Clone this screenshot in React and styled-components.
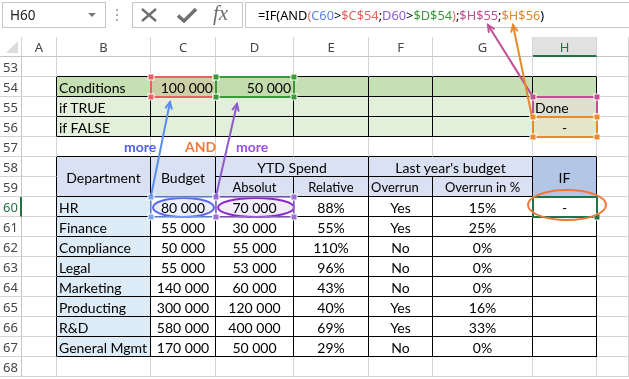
import styled, { createGlobalStyle } from "styled-components";

const GlobalStyle = createGlobalStyle`
  body {
    margin: 0;
    background: #fff;
    font-family: "Lato", "Liberation Sans", sans-serif;
  }
`;

const COLS = ["A", "B", "C", "D", "E", "F", "G", "H", "I"];
const ROWS = Array.from({ length: 16 }, (_, i) => 53 + i);

const people = [
  ["HR", "80 000", "70 000", "88%", "Yes", "15%", "-"],
  ["Finance", "55 000", "30 000", "55%", "Yes", "25%", ""],
  ["Compliance", "50 000", "55 000", "110%", "No", "0%", ""],
  ["Legal", "55 000", "53 000", "96%", "No", "0%", ""],
  ["Marketing", "140 000", "60 000", "43%", "No", "0%", ""],
  ["Producting", "300 000", "120 000", "40%", "Yes", "16%", ""],
  ["R&D", "580 000", "400 000", "69%", "Yes", "33%", ""],
  ["General Mgmt", "170 000", "50 000", "29%", "No", "0%", ""],
];

const cells = {
  B54: { t: "Conditions" },
  C54: { t: "100 000", a: "right", bg: "#cdd0a6" },
  D54: { t: "50 000", a: "right", bg: "#c3dcae" },
  B55: { t: "if TRUE" },
  H55: { t: "Done", bg: "#dedfcf" },
  B56: { t: "if FALSE" },
  H56: { t: "-", a: "center", bg: "#e3e6c8" },
  B58: { t: "Department", a: "center", rs: 2 },
  C58: { t: "Budget", a: "center", rs: 2 },
  D58: { t: "YTD Spend", a: "center", cs: 2 },
  F58: { t: "Last year's budget", a: "center", cs: 2 },
  H58: { t: "IF", a: "center", rs: 2, bg: "#b4c6e7" },
  D59: { t: "Absolut", a: "center", small: true },
  E59: { t: "Relative", a: "center", small: true },
  F59: { t: "Overrun", small: true },
  G59: { t: "Overrun in %", a: "center", small: true },
};
people.forEach((p, i) => {
  const r = 60 + i;
  cells["B" + r] = { t: p[0], bg: "#ddebf7" };
  ["C", "D", "E", "F", "G", "H"].forEach((c, j) => {
    cells[c + r] = { t: p[j + 1], a: "center" };
  });
});
const covered = new Set(["B59", "C59", "E58", "G58", "H59"]);

const inRange = (r, c) =>
  c >= 1 && c <= 7 && ((r >= 54 && r <= 56) || (r >= 58 && r <= 67));

const fillFor = (r, c) => {
  if (c < 1 || c > 7) return "#fff";
  if (r === 54) return "#c6e0b4";
  if (r === 55 || r === 56) return "#e2efda";
  if (r === 58 || r === 59) return "#d9e1f2";
  return "#fff";
};

const Page = styled.div`
  position: relative;
  width: 629px;
  height: 379px;
  overflow: hidden;
`;

const FormulaBar = styled.div`
  display: flex;
  align-items: stretch;
  height: 26px;
  padding: 2px 0 9px 2px;
  font-family: "Noto Sans", "Open Sans", sans-serif;
`;

const NameBox = styled.div`
  width: 104px;
  box-sizing: border-box;
  border: 1px solid #c6c6c6;
  display: flex;
  align-items: center;
  justify-content: space-between;
  padding: 0 9px 0 7px;
  font-size: 13.5px;
  color: #222;
`;

const Caret = styled.span`
  width: 0;
  height: 0;
  border-left: 4px solid transparent;
  border-right: 4px solid transparent;
  border-top: 4px solid #7a7a7a;
`;

const Dots = styled.div`
  width: 2px;
  height: 12px;
  margin: 7px 14px 0 10px;
  background: repeating-linear-gradient(#b0b0b0 0 2px, transparent 2px 5px);
`;

const IconBox = styled.div`
  width: 111px;
  box-sizing: border-box;
  border: 1px solid #c6c6c6;
  display: flex;
  align-items: center;
  padding-left: 7px;
  gap: 19px;
  color: #707070;
`;

const Fx = styled.span`
  font-family: "Liberation Serif", serif;
  font-style: italic;
  font-size: 21px;
  color: #6e6e6e;
  margin-left: -3px;
  margin-top: -3px;
`;

const FormulaInput = styled.div`
  flex: 1;
  margin-left: 2px;
  border: 1px solid #c6c6c6;
  border-right: none;
  display: flex;
  align-items: center;
  padding-left: 12px;
  font-size: 12.8px;
  white-space: nowrap;
  color: #000;
`;

const Ref = styled.span`
  color: ${(p) => p.$c};
`;

const Sheet = styled.div`
  display: grid;
  grid-template-columns: 22px 35px 94px 65px 78px 75px 64px 100px 64px 1fr;
  grid-auto-rows: 20px;
`;

const Corner = styled.div`
  grid-row: 1;
  grid-column: 1;
  box-sizing: border-box;
  border-right: 1px solid #d4d4d4;
  border-bottom: 1px solid #c6c6c6;
  position: relative;
  &::after {
    content: "";
    position: absolute;
    right: 3px;
    bottom: 3px;
    width: 0;
    height: 0;
    border-left: 12px solid transparent;
    border-bottom: 12px solid #dcdcdc;
  }
`;

const ColHead = styled.div`
  grid-row: 1;
  grid-column: ${(p) => p.$col};
  box-sizing: border-box;
  border-right: 1px solid #d4d4d4;
  border-bottom: ${(p) => (p.$on ? "2px solid #217346" : "1px solid #c6c6c6")};
  background: ${(p) => (p.$on ? "#e1e1e1" : "#fff")};
  color: ${(p) => (p.$on ? "#217346" : "#444")};
  display: flex;
  align-items: center;
  justify-content: center;
  font-family: "Noto Sans", "Open Sans", sans-serif;
  font-size: 13px;
  padding-top: ${(p) => (p.$on ? "1px" : "0")};
`;

const RowHead = styled.div`
  grid-row: ${(p) => p.$row};
  grid-column: 1;
  box-sizing: border-box;
  border-right: ${(p) => (p.$on ? "2px solid #217346" : "1px solid #c6c6c6")};
  border-bottom: 1px solid #d4d4d4;
  color: ${(p) => (p.$on ? "#217346" : "#444")};
  display: flex;
  align-items: center;
  padding-left: 3px;
  font-family: "Noto Sans", "Open Sans", sans-serif;
  font-size: 13px;
`;

const Cell = styled.div`
  grid-row: ${(p) => p.$row} / span ${(p) => p.$rs};
  grid-column: ${(p) => p.$col} / span ${(p) => p.$cs};
  box-sizing: border-box;
  border-right: 1px solid ${(p) => (p.$rb ? "#000" : "#d4d4d4")};
  border-bottom: 1px solid ${(p) => (p.$bb ? "#000" : "#d4d4d4")};
  background: ${(p) => p.$bg};
  display: flex;
  align-items: center;
  justify-content: ${(p) =>
    p.$align === "right" ? "flex-end" : p.$align === "center" ? "center" : "flex-start"};
  padding: 1px 2px 0 2px;
  font-size: ${(p) => (p.$small ? "13px" : "14px")};
  color: #000;
  white-space: nowrap;
`;

const Overlay = styled.svg`
  position: absolute;
  left: 0;
  top: 0;
  pointer-events: none;
`;

const Tint = styled.ellipse`
  mix-blend-mode: multiply;
`;

const Note = styled.div`
  position: absolute;
  top: 138px;
  left: ${(p) => p.$x}px;
  color: ${(p) => p.$c};
  font-weight: 700;
  font-size: 14px;
`;

const Selection = ({ x, y, w, h, c, sw = 2, handles = true }) => {
  const pts = [
    [x, y],
    [x + w, y],
    [x, y + h],
    [x + w, y + h],
  ];
  return (
    <g>
      <rect x={x} y={y} width={w} height={h} fill="none" stroke={c} strokeWidth={sw} />
      {handles &&
        pts.map(([px, py], i) => (
          <rect key={i} x={px - 3} y={py - 3} width={6} height={6} fill={c} stroke="#fff" strokeWidth={1} />
        ))}
    </g>
  );
};

const Arrow = ({ x1, y1, x2, y2, c }) => {
  const a = Math.atan2(y2 - y1, x2 - x1);
  const l = 7;
  const s = 0.45;
  const p1 = [x2 - l * Math.cos(a - s), y2 - l * Math.sin(a - s)];
  const p2 = [x2 - l * Math.cos(a + s), y2 - l * Math.sin(a + s)];
  return (
    <g stroke={c} strokeWidth={2} fill="none" strokeLinecap="round">
      <line x1={x1} y1={y1} x2={x2} y2={y2} />
      <polyline points={`${p1[0]},${p1[1]} ${x2},${y2} ${p2[0]},${p2[1]}`} />
    </g>
  );
};

const renderCells = () => {
  const out = [];
  ROWS.forEach((r) => {
    COLS.forEach((col, c) => {
      const id = col + r;
      if (covered.has(id)) return;
      const d = cells[id] || {};
      const rs = d.rs || 1;
      const cs = d.cs || 1;
      const lastC = c + cs - 1;
      const lastR = r + rs - 1;
      const rb = inRange(r, lastC) || inRange(r, lastC + 1);
      const bb = inRange(lastR, c) || inRange(lastR + 1, c);
      out.push(
        <Cell
          key={id}
          $row={r - 51}
          $col={c + 2}
          $rs={rs}
          $cs={cs}
          $rb={rb}
          $bb={bb}
          $bg={d.bg || fillFor(r, c)}
          $align={d.a}
          $small={d.small}
        >
          {d.t}
        </Cell>
      );
    });
  });
  return out;
};

export default function App() {
  return (
    <Page>
      <GlobalStyle />
      <FormulaBar>
        <NameBox>
          H60
          <Caret />
        </NameBox>
        <Dots />
        <IconBox>
          <svg width="18" height="14" viewBox="0 0 18 14">
            <path d="M2 1 L16 13 M16 1 L2 13" stroke="#707070" strokeWidth="2.4" />
          </svg>
          <svg width="20" height="15" viewBox="0 0 20 15">
            <path d="M1 7.5 L7 13 L19 1" stroke="#707070" strokeWidth="3.4" fill="none" />
          </svg>
          <Fx>fx</Fx>
        </IconBox>
        <FormulaInput>
          =IF(AND<Ref $c="#e4716b">(</Ref>
          <Ref $c="#5b82e6">C60</Ref>&gt;<Ref $c="#e8625f">$C$54</Ref>;
          <Ref $c="#8e5ccc">D60</Ref>&gt;<Ref $c="#3a9a3a">$D$54</Ref>
          <Ref $c="#e4716b">)</Ref>;<Ref $c="#c04f93">$H$55</Ref>;
          <Ref $c="#e8892c">$H$56</Ref>)
        </FormulaInput>
      </FormulaBar>
      <Sheet>
        <Corner />
        {COLS.map((col, c) => (
          <ColHead key={col} $col={c + 2} $on={col === "H"}>
            {col === "I" ? "" : col}
          </ColHead>
        ))}
        {ROWS.map((r) => (
          <RowHead key={r} $row={r - 51} $on={r === 60}>
            {r}
          </RowHead>
        ))}
        {renderCells()}
      </Sheet>
      <Note $x={124} $c="#4f5df0">more</Note>
      <Note $x={185} $c="#f07a3a">AND</Note>
      <Note $x={236} $c="#9a4fe0">more</Note>
      <Overlay width="629" height="379" viewBox="0 0 629 379">
        <Tint cx="183.5" cy="207.5" rx="30.5" ry="9.5" fill="#eef0ff" />
        <Tint cx="256" cy="207.5" rx="38" ry="9.5" fill="#f3edfb" />
        <ellipse cx="183.5" cy="207.5" rx="30.5" ry="9.5" fill="none" stroke="#5c68f2" strokeWidth="2" />
        <ellipse cx="256" cy="207.5" rx="38" ry="9.5" fill="none" stroke="#8b28c6" strokeWidth="2" />
        <Selection x={151} y={77} w={65} h={20} c="#e8625f" />
        <Selection x={216} y={77} w={78} h={20} c="#3a9a3a" />
        <Selection x={533} y={97} w={64} h={20} c="#c04f93" />
        <Selection x={533} y={117} w={64} h={20} c="#e8892c" />
        <Selection x={151} y={197} w={65} h={20} c="#7ea3f2" sw={1.5} />
        <Selection x={216} y={197} w={78} h={20} c="#9b70d0" sw={1.5} />
        <rect x="533" y="197" width="64" height="20" fill="none" stroke="#217346" strokeWidth="2" />
        <rect x="594" y="214" width="6" height="6" fill="#217346" stroke="#fff" strokeWidth="1" />
        <ellipse cx="567" cy="205" rx="39" ry="15" fill="none" stroke="#f0773a" strokeWidth="2" />
        <Arrow x1={151} y1={196} x2={170} y2={102} c="#5b8def" />
        <Arrow x1={216} y1={196} x2={237} y2={104} c="#8e5ccc" />
        <Arrow x1={533} y1={97} x2={488} y2={25} c="#c04f93" />
        <Arrow x1={532} y1={117} x2={513} y2={25} c="#e8892c" />
      </Overlay>
    </Page>
  );
}
